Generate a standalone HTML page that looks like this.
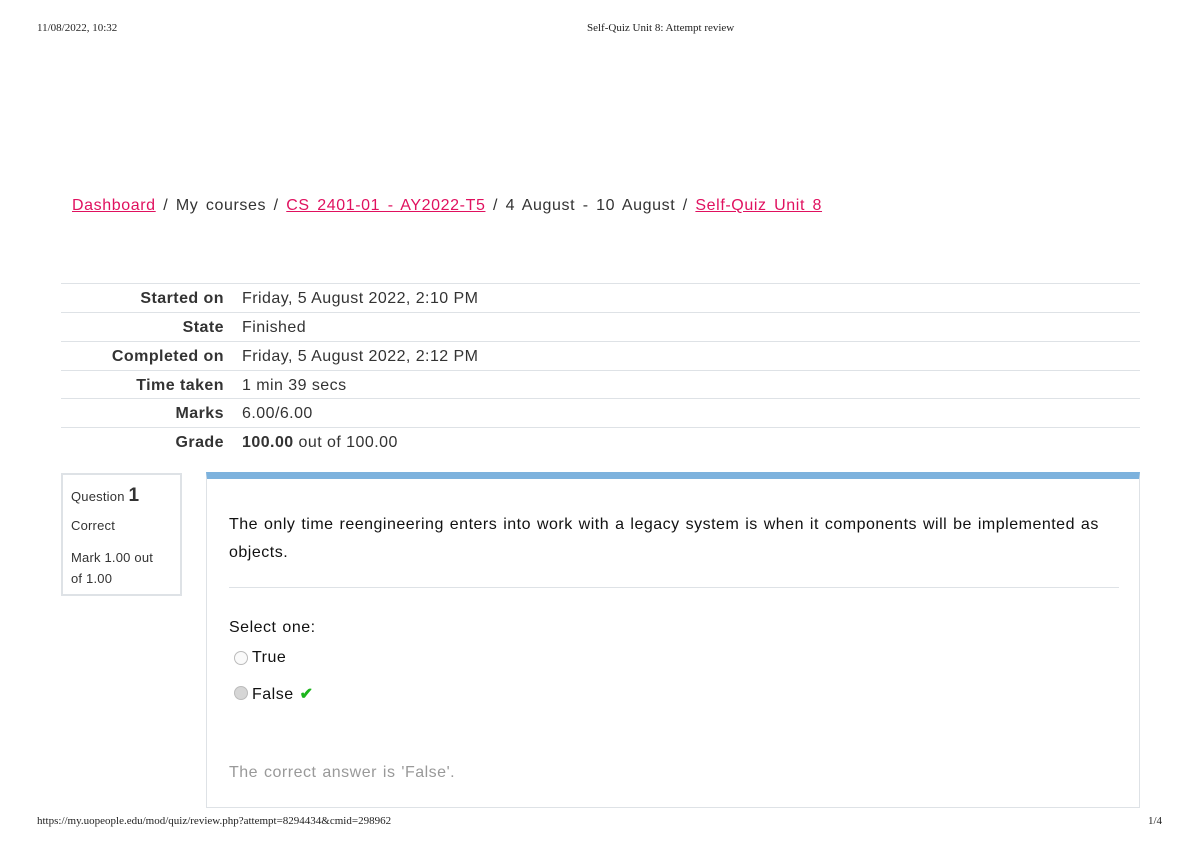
<!DOCTYPE html>
<html><head><style>
body{margin:0;width:1200px;height:849px;background:#fff;position:relative;font-family:"Liberation Sans",sans-serif;color:#1d2125;overflow:hidden}
.a{position:absolute}
.hdr{font-family:"Liberation Serif",serif;font-size:11px;color:#222}
.bc{left:72px;top:197px;font-size:16px;color:#333;white-space:nowrap;letter-spacing:0.6px;word-spacing:2.5px}
.bc a{color:#e0115f;text-decoration:underline}
.row{position:absolute;left:61px;width:1079px;height:29px;border-top:1px solid #dee2e6;font-size:16px;line-height:29px;letter-spacing:0.45px}
.row b{position:absolute;right:916px;text-align:right;color:#333}
.row span{position:absolute;left:181px;color:#333}
.q{letter-spacing:0.5px;word-spacing:1px}
</style></head><body>
<div class="a hdr" style="left:37px;top:22px">11/08/2022, 10:32</div>
<div class="a hdr" style="left:587px;top:22px">Self-Quiz Unit 8: Attempt review</div>
<div class="a hdr" style="left:37px;top:815px">https://my.uopeople.edu/mod/quiz/review.php?attempt=8294434&amp;cmid=298962</div>
<div class="a hdr" style="left:1148px;top:815px">1/4</div>
<div class="a bc"><a>Dashboard</a> / My courses / <a>CS 2401-01 - AY2022-T5</a> / 4 August - 10 August / <a>Self-Quiz Unit 8</a></div>
<div class="row" style="top:283px"><b>Started on</b><span>Friday, 5 August 2022, 2:10 PM</span></div>
<div class="row" style="top:312px"><b>State</b><span>Finished</span></div>
<div class="row" style="top:341px"><b>Completed on</b><span>Friday, 5 August 2022, 2:12 PM</span></div>
<div class="row" style="top:370px"><b>Time taken</b><span>1 min 39 secs</span></div>
<div class="row" style="top:398px"><b>Marks</b><span>6.00/6.00</span></div>
<div class="row" style="top:427px"><b>Grade</b><span><b style="position:static">100.00</b> out of 100.00</span></div>
<div class="a" style="left:61px;top:473px;width:117px;height:119px;border:2px solid #dee2e6;background:#fff;font-size:13px;color:#333;letter-spacing:0.2px">
<div style="position:absolute;left:8px;top:10px">Question <b style="font-size:19px">1</b></div>
<div style="position:absolute;left:8px;top:43px">Correct</div>
<div style="position:absolute;left:8px;top:72px;line-height:21px">Mark 1.00 out<br>of 1.00</div>
</div>
<div class="a" style="left:206px;top:472px;width:932px;height:328px;border:1px solid #dee2e6;border-top:7px solid #7db2dd;background:#fff">
<div class="a q" style="left:22px;top:32px;width:890px;font-size:16px;line-height:28px;color:#111">The only time reengineering enters into work with a legacy system is when it components will be implemented as objects.</div>
<div class="a" style="left:22px;top:108px;width:890px;border-top:1px solid #dee2e6"></div>
<div class="a q" style="left:22px;top:140px;font-size:16px;color:#111">Select one:</div>
<div class="a" style="left:27px;top:172px;width:12px;height:12px;border:1px solid #bbb;border-radius:50%;background:#fafafa"></div>
<div class="a q" style="left:45px;top:170px;font-size:16px;color:#111">True</div>
<div class="a" style="left:27px;top:207px;width:12px;height:12px;border:1px solid #bbb;border-radius:50%;background:#d6d6d6"></div>
<div class="a q" style="left:45px;top:205px;font-size:16px;color:#111">False <span style="color:#1db51d;font-weight:bold">✔</span></div>
<div class="a q" style="left:22px;top:285px;font-size:16px;color:#999">The correct answer is 'False'.</div>
</div>
</body></html>
